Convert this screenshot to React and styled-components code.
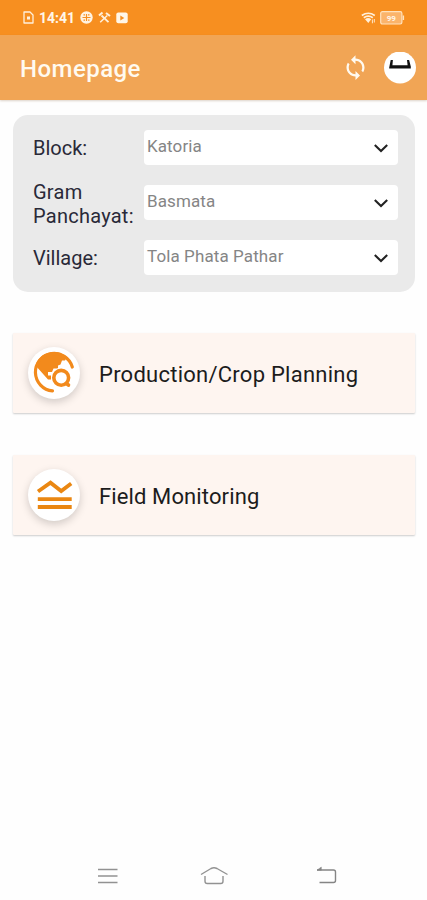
import React from "react";
import styled, { createGlobalStyle } from "styled-components";

const GlobalStyle = createGlobalStyle`
  * {
    box-sizing: border-box;
  }

  body {
    margin: 0;
    background: #fefefe;
    font-family: Roboto, "Liberation Sans", sans-serif;
  }
`;

const Screen = styled.div`
  display: flex;
  flex-direction: column;
  width: 100%;
  height: 900px;
  overflow: hidden;
`;

const StatusBar = styled.div`
  display: flex;
  align-items: center;
  justify-content: space-between;
  height: 35px;
  padding: 0 22px 0 23px;
  background: #f78f20;
`;

const StatusGroup = styled.div`
  display: flex;
  align-items: center;
  gap: ${({ $gap }) => $gap}px;

  svg {
    display: block;
  }
`;

const Clock = styled.span`
  width: 36px;
  color: #fff6e8;
  font-size: 14px;
  font-weight: 700;
  line-height: 16px;
  white-space: nowrap;
`;

const AppBar = styled.header`
  display: flex;
  align-items: center;
  height: 65px;
  padding: 0 11px 0 20px;
  background: #f1a555;
  box-shadow: 0 1px 2px rgba(120, 80, 40, 0.25);
`;

const Title = styled.h1`
  flex: 1;
  margin: 0;
  padding-top: 3px;
  color: #fffaf0;
  font-size: 24px;
  font-weight: 500;
  letter-spacing: 0.45px;
`;

const IconButton = styled.button`
  width: ${({ $size }) => $size}px;
  height: ${({ $size }) => $size}px;
  margin: 0 0 0 ${({ $left }) => $left || 0}px;
  padding: 0;
  border: 0;
  background: none;

  svg {
    display: block;
  }
`;

const Content = styled.main`
  flex: 1;
  padding: 15px 12px 0 13px;
`;

const FilterPanel = styled.section`
  display: grid;
  grid-template-columns: 111px 254px;
  grid-template-rows: 35px 35px 35px;
  row-gap: 20px;
  align-items: center;
  height: 177px;
  padding: 15px 0 0 20px;
  border-radius: 15px;
  background: #eaeaea;
`;

const Label = styled.label`
  padding-top: ${({ $top }) => $top}px;
  color: #292938;
  font-size: 20px;
  line-height: 24px;
  letter-spacing: ${({ $spacing }) => $spacing}px;
`;

const Select = styled.div`
  display: flex;
  justify-content: space-between;
  height: 35px;
  padding: 0 9px 0 3px;
  border-radius: 4px;
  background: #fff;
  color: #858585;
  font-size: 17px;
  line-height: 33px;
  letter-spacing: 0.1px;

  svg {
    margin-top: 10px;
  }
`;

const MenuCard = styled.article`
  display: flex;
  align-items: center;
  height: 80px;
  margin-top: ${({ $top }) => $top}px;
  padding-left: 15px;
  border-radius: 1px;
  background: #fef5f0;
  box-shadow: 0 1px 2px rgba(0, 0, 0, 0.2);
`;

const RoundIcon = styled.div`
  width: 52px;
  height: 52px;
  margin-right: 19px;
  border-radius: 50%;
  background: #fff;
  box-shadow: 0 3px 9px rgba(0, 0, 0, 0.18);

  svg {
    display: block;
  }
`;

const CardTitle = styled.h2`
  margin: 0;
  padding-top: 3px;
  color: #1c1c1c;
  font-size: 22px;
  font-weight: 400;
  letter-spacing: ${({ $spacing }) => $spacing}px;
`;

const NavBar = styled.nav`
  display: grid;
  grid-template-columns: 24px 30px 24px;
  column-gap: 80px;
  align-items: center;
  height: 48px;
  padding-left: 95px;

  svg:last-child {
    margin-left: 6px;
  }
`;

const SimIcon = () => (
  <svg width="11" height="13" viewBox="0 0 11 13" fill="none" stroke="#fff0db" strokeWidth="1.3">
    <path d="M1 1H7L10 4V12H1Z" strokeLinejoin="round" />
    <rect x="4" y="5.5" width="3" height="3" fill="#fff0db" stroke="none" />
  </svg>
);

const GlobeIcon = () => (
  <svg width="13" height="13" viewBox="0 0 13 13">
    <circle cx="6.5" cy="6.5" r="6.2" fill="#fff3e2" />
    <path d="M6.5 3V10M2.5 6.5H10.5M3.5 3.8H5M8 3.8H9.5M3.5 9.2H5M8 9.2H9.5" stroke="#f78f20" strokeWidth="1.2" />
  </svg>
);

const ToolsIcon = () => (
  <svg width="13" height="13" viewBox="0 0 13 13" fill="none" stroke="#fff0db">
    <path d="M3.5 4.5L10.5 11.2" strokeWidth="1.8" />
    <path d="M9.3 4.5L2.2 11.2" strokeWidth="1.5" />
    <path d="M1 4.5L4.5 1.5M8 2L12 5" strokeWidth="2.1" />
  </svg>
);

const PlayIcon = () => (
  <svg width="12" height="12" viewBox="0 0 12 12">
    <rect x="0.3" y="0.5" width="11.4" height="10.8" rx="2" fill="#fff6e8" />
    <path d="M4.3 3.5L8.3 6L4.3 8.5Z" fill="#f78f20" />
  </svg>
);

const WifiIcon = () => (
  <svg width="15" height="12" viewBox="0 0 15 12" fill="none" stroke="#fff0db">
    <path d="M0.8 3.5Q7.3 -1 13.8 3.5" strokeWidth="1.7" />
    <path d="M2.8 5.8Q7.3 2.5 11.8 5.8" strokeWidth="1.7" />
    <path d="M4 7.2Q7.3 5 10.2 7.2L7.3 11Z" fill="#fff0db" stroke="none" />
    <path d="M11.4 7.5V11.3M13.3 7V10.5" strokeWidth="0.9" />
  </svg>
);

const BatteryIcon = () => (
  <svg width="25" height="14" viewBox="0 0 25 14">
    <rect x="0.7" y="0.7" width="21.2" height="12.3" rx="1.7" fill="#fbb46b" stroke="#ffe2bd" strokeWidth="1.2" />
    <path d="M23.4 4.5V9" stroke="#ffe2bd" strokeWidth="1.4" />
    <text x="11.3" y="9.8" fill="#fff6e8" fontSize="8" fontWeight="700" textAnchor="middle">
      99
    </text>
  </svg>
);

const SyncIcon = () => (
  <svg width="27" height="27" viewBox="0 0 24 24" fill="#fffaf0">
    <path d="M12 4V1L8 5l4 4V6c3.31 0 6 2.69 6 6 0 1.01-.25 1.97-.7 2.8l1.46 1.46C19.54 15.03 20 13.57 20 12c0-4.42-3.58-8-8-8zm0 14c-3.31 0-6-2.69-6-6 0-1.01.25-1.97.7-2.8L5.24 7.74C4.46 8.97 4 10.43 4 12c0 4.42 3.58 8 8 8v3l4-4-4-4v3z" />
  </svg>
);

const AvatarIcon = () => (
  <svg width="32" height="32" viewBox="0 0 32 32">
    <circle cx="16" cy="15.5" r="16" fill="#fff" />
    <path d="M5.2 15.5L6.7 8H8.9L8.4 13.2H23.6L23 8H25.1L26.8 14.5V16.5H5.2Z" fill="#111" />
  </svg>
);

const ChevronIcon = () => (
  <svg width="16" height="16" viewBox="0 0 16 16" fill="none" stroke="#222" strokeWidth="2.1">
    <path d="M1.8 5L8 11L14.2 5" />
  </svg>
);

const ExploreIcon = () => (
  <svg width="52" height="52" viewBox="0 0 52 52" fill="none" stroke="#f28a1c">
    <path
      d="M7.5 18.5C10 10 17 5 26 5C31.5 5 35.5 7 39 10L37 13.5H34L32.5 17.5L30 18.5V21.5H25.5L24 25H20V28.5H23V32.5H20Z"
      fill="#f28a1c"
      stroke="none"
    />
    <path d="M44.3 20A18.8 18.8 0 1 0 24.5 43.9" strokeWidth="3.2" strokeLinecap="round" />
    <circle cx="33.2" cy="30.8" r="7.4" fill="#fff" stroke="#fff" strokeWidth="5.5" />
    <circle cx="33.2" cy="30.8" r="7.4" strokeWidth="3.6" />
    <path d="M38.8 36.8L40.4 38" strokeWidth="3.8" strokeLinecap="round" />
  </svg>
);

const MonitorIcon = () => (
  <svg width="52" height="52" viewBox="0 0 52 52" fill="none" stroke="#ea8712" strokeWidth="3.8">
    <path d="M10 22.5L22.5 13.7L33.2 22L43.2 14.4" />
    <path d="M9.8 30.2H43.7M9.8 38H43.7" />
  </svg>
);

const MenuIcon = () => (
  <svg width="24" height="20" viewBox="0 0 24 20" stroke="#929292" strokeWidth="1.3">
    <path d="M3 3.5H22.5M3 10H22.5M3 16.5H22.5" />
  </svg>
);

const HomeIcon = () => (
  <svg width="30" height="22" viewBox="0 0 30 22" fill="none" stroke="#929292" strokeWidth="1.4">
    <path d="M2 9.5L12 3.5Q15 2 18 3.5L28.5 9.5" />
    <path d="M6 11V16.3Q6 18.5 8.3 18.5H21.7Q24 18.5 24 16.3V11" />
  </svg>
);

const BackIcon = () => (
  <svg width="24" height="20" viewBox="0 0 24 20" fill="none" stroke="#858585" strokeWidth="1.4">
    <path d="M2 4H18.5Q20.5 4 20.5 6V14.5Q20.5 16.5 18.5 16.5H4.5" />
    <path d="M2 4.2L6.3 1V4.2Z" fill="#858585" strokeWidth="0.5" />
  </svg>
);

const filters = [
  { label: "Block:", value: "Katoria", spacing: 0, top: 1 },
  { label: "Gram Panchayat:", value: "Basmata", spacing: 0.25, top: 3 },
  { label: "Village:", value: "Tola Phata Pathar", spacing: 0, top: 1 },
];

const App = () => {
  return (
    <Screen>
      <GlobalStyle />
      <StatusBar>
        <StatusGroup $gap={5}>
          <SimIcon />
          <Clock>14:41</Clock>
          <GlobeIcon />
          <ToolsIcon />
          <PlayIcon />
        </StatusGroup>
        <StatusGroup $gap={4}>
          <WifiIcon />
          <BatteryIcon />
        </StatusGroup>
      </StatusBar>

      <AppBar>
        <Title>Homepage</Title>
        <IconButton $size={27}>
          <SyncIcon />
        </IconButton>
        <IconButton $size={32} $left={15}>
          <AvatarIcon />
        </IconButton>
      </AppBar>

      <Content>
        <FilterPanel>
          {filters.map(({ label, value, spacing, top }) => (
            <React.Fragment key={label}>
              <Label $spacing={spacing} $top={top}>
                {label}
              </Label>
              <Select>
                {value}
                <ChevronIcon />
              </Select>
            </React.Fragment>
          ))}
        </FilterPanel>

        <MenuCard $top={41}>
          <RoundIcon>
            <ExploreIcon />
          </RoundIcon>
          <CardTitle $spacing={0.25}>Production/Crop Planning</CardTitle>
        </MenuCard>
        <MenuCard $top={42}>
          <RoundIcon>
            <MonitorIcon />
          </RoundIcon>
          <CardTitle $spacing={0.12}>Field Monitoring</CardTitle>
        </MenuCard>
      </Content>

      <NavBar>
        <MenuIcon />
        <HomeIcon />
        <BackIcon />
      </NavBar>
    </Screen>
  );
};

export default App;
